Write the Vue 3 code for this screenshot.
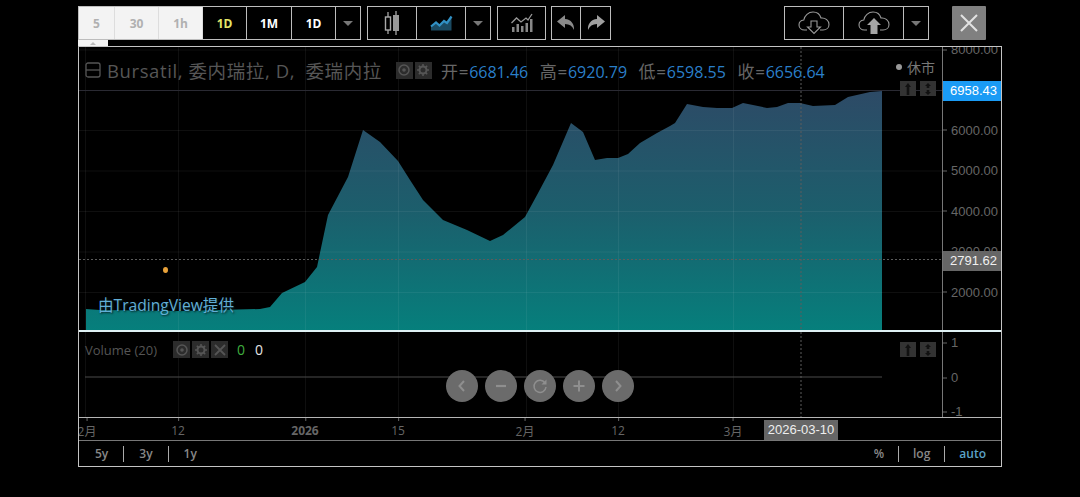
<template>
  <div class="page">
    <div class="toolbar">
      <div class="group">
        <button v-for="b in intervals" :key="b.label + b.width" class="tool" :class="b.cls" :style="{ width: b.width + 'px' }">{{ b.label }}</button>
        <button class="tool caret-btn"><span class="caret"></span></button>
      </div>

      <div class="group group-chart">
        <button class="tool w49">
          <svg width="24" height="24" viewBox="0 0 24 24">
            <path d="M8 1v5M8 19v4M16 0v5M16 20v4" stroke="#999" stroke-width="1.4" fill="none" />
            <rect x="5.5" y="6" width="5" height="13" fill="none" stroke="#aaa" stroke-width="1.4" />
            <rect x="13" y="4" width="6" height="16" fill="#999" />
          </svg>
        </button>
        <button class="tool w49">
          <svg width="24" height="18" viewBox="0 0 24 18">
            <path d="M2 16.500v-4l5-4 3.500 3 4.500-4.500 3 2 4.500-6.500v14z" fill="#1b4a62" />
            <path d="M2 12.500l5-4 3.500 3 4.500-4.500 3 2 4.500-6.500" fill="none" stroke="#3190c4" stroke-width="2.200" />
          </svg>
        </button>
        <button class="tool caret-btn"><span class="caret"></span></button>
      </div>

      <div class="group group-ind">
        <button class="tool w47">
          <svg width="24" height="20" viewBox="0 0 24 20">
            <path d="M2 19v-5h2.500v5zM6.500 19v-8H9v8zM11 19v-6h2.500v6zM15.500 19v-9H18v9zM20 19V6h2.500v13z" fill="#888" />
            <path d="M1.500 10l5-5 4.500 4 5-4 2 2 4-6" fill="none" stroke="#999" stroke-width="1.300" />
          </svg>
        </button>
      </div>

      <div class="group group-undo">
        <button class="tool w29">
          <svg width="20" height="16" viewBox="0 0 20 16"><path d="M9 0L1 6.500 9 13V9c4.500 0 7.500 2 9 6 .5-6-3-10.500-9-11z" fill="#8a8a8a" /></svg>
        </button>
        <button class="tool w29">
          <svg width="20" height="16" viewBox="0 0 20 16"><path d="M11 0l8 6.500L11 13V9c-4.500 0-7.500 2-9 6-.5-6 3-10.500 9-11z" fill="#a0a0a0" /></svg>
        </button>
      </div>

      <div class="group group-cloud">
        <button class="tool w59">
          <svg width="32" height="24" viewBox="0 0 32 24">
            <path d="M9 19H6.500C3.500 19 1 17 1 14c0-2.700 2-4.700 4.800-5C6.500 4.500 10.500 1 15 1c4 0 7 2.400 8 6 4.500-.5 8 2.500 8 6.500 0 3.200-2.600 5.500-6 5.500h-3" fill="none" stroke="#999" stroke-width="1.100" />
            <path d="M13 10h6v6h3.500L16 22.500 9.500 16H13z" fill="none" stroke="#999" stroke-width="1.100" />
          </svg>
        </button>
        <button class="tool w60">
          <svg width="32" height="24" viewBox="0 0 32 24">
            <path d="M9 19H6.500C3.500 19 1 17 1 14c0-2.700 2-4.700 4.800-5C6.500 4.500 10.500 1 15 1c4 0 7 2.400 8 6 4.500-.5 8 2.500 8 6.500 0 3.200-2.600 5.500-6 5.500h-3" fill="none" stroke="#999" stroke-width="1.100" />
            <path d="M12.500 23v-9H9l7-7 7 7h-3.500v9z" fill="#a5a5a5" />
          </svg>
        </button>
        <button class="tool caret-btn"><span class="caret"></span></button>
      </div>

      <button class="close">
        <svg width="20" height="20" viewBox="0 0 20 20"><path d="M2 2l16 16M18 2L2 18" stroke="#e2e2e2" stroke-width="2" /></svg>
      </button>
    </div>

    <div class="tab"><span class="tab-caret"></span></div>

    <div class="frame">
      <div class="pane price-pane">
        <div class="plot">
          <svg class="plot-svg" width="863" height="283" viewBox="79 47 863 283">
            <defs>
              <linearGradient id="area" gradientUnits="userSpaceOnUse" x1="0" y1="91" x2="0" y2="330">
                <stop offset="0" stop-color="#2d4a66" />
                <stop offset="0.5" stop-color="#1c5e6c" />
                <stop offset="1" stop-color="#067f7c" />
              </linearGradient>
            </defs>
            <path :d="areaPath" fill="url(#area)" />
            <g class="grid">
              <line v-for="y in gridY" :key="y" x1="79" x2="942" :y1="y" :y2="y" />
              <line v-for="x in gridX" :key="x" :x1="x" :x2="x" y1="47" y2="330" />
            </g>
            <line class="last-line" x1="79" x2="942" y1="90.500" y2="90.500" />
            <line class="cross" x1="79" x2="942" y1="259.500" y2="259.500" />
            <line class="cross" x1="801" x2="801" y1="47" y2="330" />
            <ellipse cx="165.500" cy="270" rx="2.500" ry="3" fill="#e8a23a" />
          </svg>

          <div class="legend">
            <svg class="collapse" width="16" height="16" viewBox="0 0 16 16">
              <rect x="1" y="1" width="14" height="14" rx="2" fill="none" stroke="#555" stroke-width="1.300" />
              <path d="M1 8h14" stroke="#555" stroke-width="1.300" />
            </svg>
            <span class="title">Bursatil, 委内瑞拉, D, <span class="title-last">委瑞内拉</span></span>
            <span class="mini-icons">
              <span class="mini">
                <svg width="14" height="14" viewBox="0 0 14 14"><circle cx="7" cy="7" r="5" fill="none" stroke="#555" stroke-width="1.500" /><circle cx="7" cy="7" r="1.800" fill="#555" /></svg>
              </span>
              <span class="mini">
                <svg width="14" height="14" viewBox="0 0 14 14"><circle cx="7" cy="7" r="3.500" fill="none" stroke="#555" stroke-width="2" /><path d="M7 1v2.500M7 10.500V13M1 7h2.500M10.500 7H13M2.800 2.800l1.800 1.800M9.400 9.400l1.800 1.800M11.200 2.800L9.400 4.600M4.600 9.400l-1.800 1.800" stroke="#555" stroke-width="1.500" /></svg>
              </span>
            </span>
            <span v-for="o in ohlc" :key="o.label" class="ohlc">
              <span class="ohlc-label">{{ o.label }}=</span><span class="ohlc-value">{{ o.value }}</span>
            </span>
          </div>

          <div class="market-status"><i></i>休市</div>
          <div class="pane-arrows price-arrows">
            <span class="mini small"><svg width="10" height="14" viewBox="0 0 10 14"><path d="M5 1l3 4H6.300v8H3.700V5H2z" fill="#111" /></svg></span>
            <span class="mini small"><svg width="10" height="14" viewBox="0 0 10 14"><path d="M5 1l3 3H6.300v2H3.700V4H2zM5 13l3-3H6.300V8H3.700v2H2z" fill="#111" /></svg></span>
          </div>

          <div class="watermark">由TradingView提供</div>
        </div>

        <div class="axis">
          <span v-for="t in priceTicks" :key="t.label" class="tick" :style="{ top: t.y - 47 + 'px' }">{{ t.label }}</span>
          <span class="tag tag-blue" :style="{ top: 90.5 - 47 + 'px' }">6958.43</span>
          <span class="tag tag-grey" :style="{ top: 260.5 - 47 + 'px' }">2791.62</span>
        </div>
      </div>

      <div class="pane volume-pane">
        <div class="plot">
          <svg class="plot-svg" width="863" height="85" viewBox="79 332 863 85">
            <g class="grid">
              <line v-for="x in gridX" :key="x" :x1="x" :x2="x" y1="332" y2="417" />
            </g>
            <line x1="85" x2="882" y1="377" y2="377" stroke="#4a4a4a" stroke-width="1" />
            <line class="cross" x1="801" x2="801" y1="332" y2="417" />
          </svg>

          <div class="volume-legend">
            <span class="volume-title">Volume (20)</span>
            <span class="mini-icons">
              <span class="mini">
                <svg width="14" height="14" viewBox="0 0 14 14"><circle cx="7" cy="7" r="5" fill="none" stroke="#555" stroke-width="1.500" /><circle cx="7" cy="7" r="1.800" fill="#555" /></svg>
              </span>
              <span class="mini">
                <svg width="14" height="14" viewBox="0 0 14 14"><circle cx="7" cy="7" r="3.500" fill="none" stroke="#555" stroke-width="2" /><path d="M7 1v2.500M7 10.500V13M1 7h2.500M10.500 7H13M2.800 2.800l1.800 1.800M9.400 9.400l1.800 1.800M11.200 2.800L9.400 4.600M4.600 9.400l-1.800 1.800" stroke="#555" stroke-width="1.500" /></svg>
              </span>
              <span class="mini">
                <svg width="14" height="14" viewBox="0 0 14 14"><path d="M2 2l10 10M12 2L2 12" stroke="#555" stroke-width="1.800" /></svg>
              </span>
            </span>
            <span class="vol-green">0</span>
            <span class="vol-white">0</span>
          </div>

          <div class="pane-arrows volume-arrows">
            <span class="mini small"><svg width="10" height="14" viewBox="0 0 10 14"><path d="M5 1l3 4H6.300v8H3.700V5H2z" fill="#111" /></svg></span>
            <span class="mini small"><svg width="10" height="14" viewBox="0 0 10 14"><path d="M5 1l3 3H6.300v2H3.700V4H2zM5 13l3-3H6.300V8H3.700v2H2z" fill="#111" /></svg></span>
          </div>

          <div class="zoom-controls">
            <button class="round"><svg width="16" height="16" viewBox="0 0 16 16"><path d="M10 3L5.500 8l4.500 5" fill="none" stroke="#8f8f8f" stroke-width="2" /></svg></button>
            <button class="round"><svg width="16" height="16" viewBox="0 0 16 16"><path d="M3 8h10" stroke="#8f8f8f" stroke-width="2.200" /></svg></button>
            <button class="round"><svg width="16" height="16" viewBox="0 0 16 16"><path d="M13 5a6 6 0 1 0 1 4" fill="none" stroke="#8f8f8f" stroke-width="1.500" /><path d="M14.500 1.500v5h-5z" fill="#8f8f8f" /></svg></button>
            <button class="round"><svg width="16" height="16" viewBox="0 0 16 16"><path d="M2.500 8h11M8 2.500v11" stroke="#8f8f8f" stroke-width="2" /></svg></button>
            <button class="round"><svg width="16" height="16" viewBox="0 0 16 16"><path d="M6 3l4.500 5L6 13" fill="none" stroke="#8f8f8f" stroke-width="2" /></svg></button>
          </div>
        </div>

        <div class="axis">
          <span v-for="t in volumeTicks" :key="t.label" class="tick" :style="{ top: t.y - 332 + 'px' }">{{ t.label }}</span>
        </div>
      </div>

      <div class="time-axis">
        <span v-for="t in timeTicks" :key="t.x" class="time-tick" :class="{ strong: t.strong }" :style="{ left: t.x - 79 + 'px' }">{{ t.label }}</span>
        <span class="time-tag">2026-03-10</span>
      </div>

      <div class="bottom-bar">
        <div class="ranges periods">
          <span v-for="r in ranges" :key="r" class="range">{{ r }}</span>
        </div>
        <div class="ranges scale">
          <span class="range">%</span>
          <span class="range">log</span>
          <span class="range auto">auto</span>
        </div>
      </div>
    </div>
  </div>
</template>

<script setup>
import { computed } from 'vue';

const intervals = [
  { label: '5', width: 36, cls: 'light' },
  { label: '30', width: 44, cls: 'light' },
  { label: '1h', width: 44, cls: 'light' },
  { label: '1D', width: 44, cls: 'active' },
  { label: '1M', width: 45, cls: '' },
  { label: '1D', width: 44, cls: '' }
];

const ohlc = [
  { label: '开', value: '6681.46' },
  { label: '高', value: '6920.79' },
  { label: '低', value: '6598.55' },
  { label: '收', value: '6656.64' }
];

const gridY = [50, 130.5, 171, 211.5, 252, 292.5];
const gridX = [85.5, 178.5, 305.5, 398.5, 526.5, 618.5, 733.5];

const priceTicks = [
  { label: '8000.00', y: 49 },
  { label: '6000.00', y: 129.5 },
  { label: '5000.00', y: 170 },
  { label: '4000.00', y: 210.5 },
  { label: '3000.00', y: 251 },
  { label: '2000.00', y: 291.5 }
];

const volumeTicks = [
  { label: '1', y: 342 },
  { label: '0', y: 377 },
  { label: '-1', y: 411 }
];

const timeTicks = [
  { label: '2月', x: 87 },
  { label: '12', x: 178 },
  { label: '2026', x: 305, strong: true },
  { label: '15', x: 398 },
  { label: '2月', x: 525 },
  { label: '12', x: 618 },
  { label: '3月', x: 733 }
];

const ranges = ['5y', '3y', '1y'];

// traced from the picture, in page coordinates
const points = [
  [86, 309], [100, 310], [180, 311], [260, 309], [270, 307], [282, 293], [305, 282], [317, 267],
  [328, 215], [348, 177], [363, 130], [380, 142], [398, 161], [410, 180], [423, 200], [443, 220],
  [467, 230], [490, 241], [503, 235], [525, 217], [537, 195], [553, 165], [571, 123], [583, 132],
  [595, 160], [607, 158], [618, 158], [628, 154], [640, 143], [657, 133], [670, 126], [675, 123],
  [687, 104], [703, 107], [717, 108], [732, 108], [743, 103], [753, 105], [767, 108], [777, 107],
  [788, 103], [800, 103], [813, 106], [835, 105], [848, 97], [870, 92], [882, 91]
];

const areaPath = computed(() => {
  const line = points.map((p) => p.join(',')).join(' L');
  return `M86,330 L${line} L882,330 Z`;
});
</script>

<style>
html,
body {
  margin: 0;
  background: #000;
}
</style>

<style scoped>
.page {
  width: 1080px;
  height: 497px;
  box-sizing: border-box;
  padding: 6px 78px 0;
  background: #000;
  font-family: 'Open Sans', 'Noto Sans CJK SC', sans-serif;
  overflow: hidden;
}

button {
  font-family: inherit;
  padding: 0;
  margin: 0;
  cursor: pointer;
}

.toolbar {
  display: flex;
  height: 34px;
  width: 908px;
}

.group {
  display: flex;
  border: 1px solid #bdbdbd;
  box-sizing: border-box;
}

.group-chart {
  margin-left: 6px;
}

.group-ind {
  margin-left: 6px;
}

.group-undo {
  margin-left: 5px;
}

.group-cloud {
  margin-left: auto;
}

.tool {
  display: flex;
  align-items: center;
  justify-content: center;
  background: #000;
  border: 0;
  border-right: 1px solid #bdbdbd;
  color: #fff;
  font-size: 12px;
  font-weight: 700;
  box-sizing: border-box;
}

.tool:last-child {
  border-right: 0;
}

.tool.light {
  background: #f3f3f3;
  color: #b0b0b0;
  border-right-color: #ddd;
}

.tool.active {
  color: #e4e66a;
}

.w29 { width: 29px; }
.w47 { width: 47px; }
.w49 { width: 49px; }
.w59 { width: 59px; }
.w60 { width: 60px; }

.caret-btn {
  width: 24px;
}

.caret {
  width: 0;
  height: 0;
  border-left: 5px solid transparent;
  border-right: 5px solid transparent;
  border-top: 5px solid #777;
}

.close {
  width: 34px;
  height: 34px;
  margin-left: 23px;
  flex: none;
  display: flex;
  align-items: center;
  justify-content: center;
  background: #808080;
  border: 0;
  border-radius: 1px;
}

.tab {
  width: 30px;
  height: 6px;
  background: #f3f3f3;
  display: flex;
  justify-content: center;
  align-items: flex-start;
  padding-top: 2px;
  box-sizing: border-box;
}

.tab-caret {
  width: 0;
  height: 0;
  border-left: 3px solid transparent;
  border-right: 3px solid transparent;
  border-bottom: 3px solid #bbb;
}

.frame {
  width: 924px;
  height: 421px;
  box-sizing: border-box;
  border: 1px solid #c4c4c4;
  display: flex;
  flex-direction: column;
}

.pane {
  display: flex;
  flex: none;
}

.price-pane {
  height: 285px;
  border-bottom: 2px solid #dff1f4;
  box-sizing: border-box;
}

.volume-pane {
  height: 86px;
  border-bottom: 1px solid #b5b5b5;
  box-sizing: border-box;
}

.plot {
  position: relative;
  width: 863px;
  flex: none;
}

.plot-svg {
  display: block;
}

.grid line {
  stroke: rgba(255, 255, 255, 0.06);
  stroke-width: 1;
}

.last-line {
  stroke: #2a2a33;
  stroke-width: 1;
}

.cross {
  stroke: #5c5c5c;
  stroke-width: 1;
  stroke-dasharray: 2 2;
}

.axis {
  position: relative;
  flex: 1;
  border-left: 1px solid #777;
  overflow: hidden;
  font-family: 'Liberation Sans', sans-serif;
  font-size: 13px;
  color: #666;
}

.tick {
  position: absolute;
  left: 8px;
  transform: translateY(-50%);
  white-space: nowrap;
}

.tick::before {
  content: '';
  position: absolute;
  left: -8px;
  top: 50%;
  width: 4px;
  height: 1px;
  background: #666;
}

.tag {
  position: absolute;
  left: 0;
  right: 0;
  height: 20px;
  line-height: 20px;
  transform: translateY(-50%);
  padding-left: 7px;
  color: #f0f0f0;
}

.tag-blue {
  background: #1a9bf5;
  color: #fff;
}

.tag-grey {
  background: #666;
}

.legend {
  position: absolute;
  left: 6px;
  top: 12px;
  height: 22px;
  display: flex;
  align-items: center;
  white-space: nowrap;
}

.collapse {
  flex: none;
}

.title {
  margin-left: 6px;
  font-size: 18.5px;
  color: #565656;
  letter-spacing: 0.6px;
}

.title-last {
  margin-left: 5px;
}

.mini-icons {
  display: flex;
  gap: 2px;
}

.legend .mini-icons {
  margin-left: 14px;
  margin-right: 9px;
}

.mini {
  width: 17px;
  height: 17px;
  background: #2c2c2c;
  display: flex;
  align-items: center;
  justify-content: center;
}

.mini.small {
  width: 16px;
  height: 15px;
  background: #333;
}

.ohlc {
  margin-right: 11.5px;
}

.ohlc-label {
  font-size: 17px;
  color: #666;
  letter-spacing: 0.75px;
}

.ohlc-value {
  font-size: 16px;
  color: #2a7fc9;
}

.market-status {
  position: absolute;
  right: 7px;
  top: 10px;
  display: flex;
  align-items: center;
  gap: 5px;
  font-size: 14px;
  color: #777;
}

.market-status i {
  width: 6px;
  height: 6px;
  border-radius: 50%;
  background: #999;
}

.pane-arrows {
  position: absolute;
  display: flex;
  gap: 4px;
}

.price-arrows {
  right: 6px;
  top: 34px;
}

.volume-arrows {
  right: 6px;
  top: 10px;
}

.watermark {
  position: absolute;
  left: 19px;
  top: 246px;
  font-size: 15.6px;
  color: #62aed6;
  text-shadow: 1px 1px 2px #06282c;
}

.volume-legend {
  position: absolute;
  left: 6px;
  top: 8px;
  display: flex;
  align-items: center;
  font-size: 13px;
  color: #555;
}

.volume-legend .mini-icons {
  margin-left: 16px;
}

.vol-green {
  margin-left: 9px;
  font-size: 14px;
  color: #3fae3f;
}

.vol-white {
  margin-left: 10px;
  font-size: 14px;
  color: #e5e5e5;
}

.zoom-controls {
  position: absolute;
  left: 367px;
  top: 38px;
  display: flex;
  gap: 7px;
}

.round {
  width: 32px;
  height: 32px;
  border-radius: 50%;
  background: #6b6b6b;
  border: 0;
  display: flex;
  align-items: center;
  justify-content: center;
}

.time-axis {
  position: relative;
  height: 23px;
  flex: none;
  border-bottom: 1px solid #777;
  box-sizing: border-box;
  overflow: hidden;
  font-size: 12px;
  color: #666;
}

.time-tick {
  position: absolute;
  top: 4px;
  transform: translateX(-50%);
  white-space: nowrap;
}

.time-tick::before {
  content: '';
  position: absolute;
  left: 50%;
  top: -4px;
  width: 1px;
  height: 3px;
  background: #666;
}

.time-tick.strong {
  font-weight: 700;
}

.time-tag {
  position: absolute;
  left: 685px;
  top: 2px;
  width: 74px;
  height: 20px;
  line-height: 20px;
  text-align: center;
  background: #666;
  color: #eee;
  font-family: 'Liberation Sans', sans-serif;
  font-size: 13px;
}

.bottom-bar {
  flex: 1;
  display: flex;
  align-items: center;
  justify-content: space-between;
}

.ranges {
  display: flex;
  align-items: center;
  font-size: 12px;
  font-weight: 600;
  color: #888;
}

.periods {
  margin-left: 1px;
}

.range {
  padding: 0 15px;
  line-height: 16px;
  border-right: 1px solid #aaa;
}

.scale .range {
  padding: 0 14px;
}

.scale .auto {
  padding-right: 15px;
}

.range:last-child {
  border-right: 0;
}

.auto {
  color: #5ba3c7;
}
</style>
